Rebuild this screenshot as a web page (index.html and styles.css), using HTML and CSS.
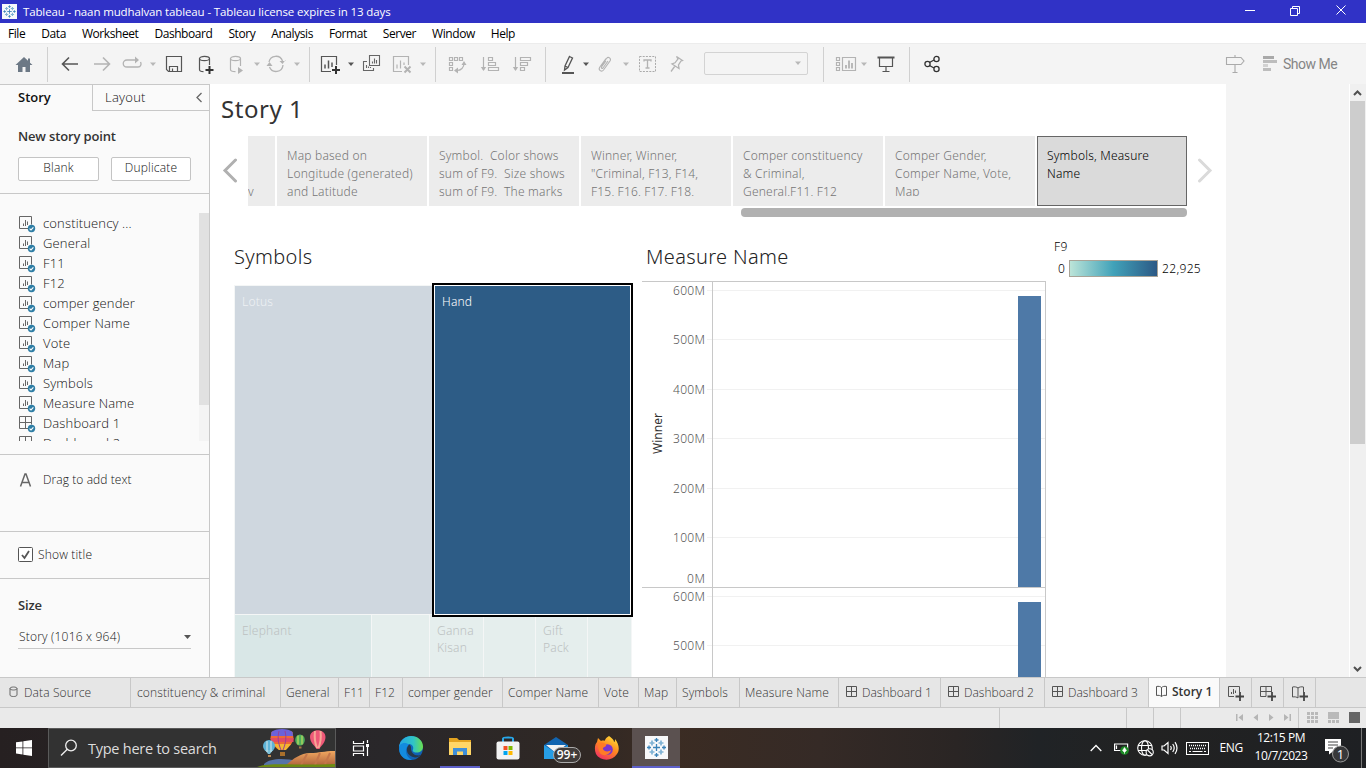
FILE: index.html
```html
<!DOCTYPE html>
<html lang="en">
<head>
<meta charset="utf-8">
<title>Tableau - naan mudhalvan tableau</title>
<link rel="stylesheet" href="styles.css">
</head>
<body>
<svg class="defs" width="0" height="0">
  <symbol id="caret" viewBox="0 0 10 20"><path d="M2 8.5h6L5 12z" fill="currentColor"/></symbol>
  <symbol id="sheet" viewBox="0 0 18 18"><g fill="none" stroke="#666"><path d="M9 12.5H.5v-12h12v8"/><path d="M4.500 10V7.500M6.500 10V4M8.500 9V5.500"/></g><circle cx="12.500" cy="12.500" r="3.700" fill="#2f7ea5"/><path d="M10.600 12.600l1.400 1.300 2.400-2.600" fill="none" stroke="#fff" stroke-width="1.100"/></symbol>
  <symbol id="dash" viewBox="0 0 18 18"><path d="M9 12.500H.5v-12h12v8M.5 6.500h12M6.500 .5v12" fill="none" stroke="#666"/><circle cx="12.500" cy="12.500" r="3.700" fill="#2f7ea5"/><path d="M10.600 12.600l1.400 1.300 2.400-2.600" fill="none" stroke="#fff" stroke-width="1.100"/></symbol>
  <symbol id="grid" viewBox="0 0 12 12"><path d="M.5 .5h10v10H.5zM.5 5.500h10M5.500 .5v10" fill="none" stroke="#555"/></symbol>
  <symbol id="logo" viewBox="0 0 23 23"><rect width="23" height="23" fill="#f7f8fa"/><g fill="none" stroke="#3b83b8" stroke-width="1.300"><path d="M11.500 8v7M8 11.500h7"/><path d="M11.500 2v4M9.500 4h4M11.500 17v4M9.500 19h4M2 11.500h4M4 9.500v4M17 11.500h4M19 9.500v4"/></g><g fill="none" stroke="#7fb2d4" stroke-width="1.700"><path d="M7 4.500v5M4.500 7h5M16 4.500v5M13.500 7h5M7 13.500v5M4.500 16h5M16 13.500v5M13.500 16h5"/></g></symbol>
</svg>

<header class="titlebar">
  <svg width="15" height="15"><use href="#logo"/></svg>
  <span class="win-title">Tableau - naan mudhalvan tableau - Tableau license expires in 13 days</span>
  <svg class="win-controls" width="102" height="14" viewBox="0 0 102 14" fill="none" stroke="#fff"><path d="M0 7.500h10M45.500 5.500h7v7h-7zM47.500 5V3.500h7v7H53M91.500 2.500l9 9M100.500 2.500l-9 9"/></svg>
</header>

<nav class="menubar"><span>File</span><span>Data</span><span>Worksheet</span><span>Dashboard</span><span>Story</span><span>Analysis</span><span>Format</span><span>Server</span><span>Window</span><span>Help</span></nav>

<div class="toolbar">
  <svg class="ic" viewBox="0 0 20 20"><path d="M10 3L1.500 11H4v7h4.500v-5h3v5H16v-7h2.500L16 8.700V4.500h-2v2.300z" fill="#6c7885"/></svg>
  <i class="sep"></i>
  <svg class="ic" viewBox="0 0 20 20"><path d="M18 10H3M9 3.500L2.500 10 9 16.500" fill="none" stroke="#555" stroke-width="1.600"/></svg>
  <svg class="ic" viewBox="0 0 20 20"><path d="M2 10h15M11 3.500l6.500 6.500-6.500 6.500" fill="none" stroke="#b3b3b3" stroke-width="1.600"/></svg>
  <svg class="ic" viewBox="0 0 20 20"><path d="M14 6H5C0 6 0 13 5 13h11c3 0 3.500-3 2.500-5" fill="none" stroke="#b3b3b3" stroke-width="1.300"/><path d="M13 2.500L17 6l-4 3.500z" fill="#b3b3b3"/></svg>
  <svg class="ca off"><use href="#caret"/></svg>
  <svg class="ic" viewBox="0 0 20 20"><path d="M2.500 2.500h15v15h-13l-2-2zM5.500 17v-4.500h8V17M8.500 17v-2.500" fill="none" stroke="#555" stroke-width="1.200"/></svg>
  <svg class="ic" viewBox="0 0 20 20"><g fill="none" stroke="#555" stroke-width="1.200"><ellipse cx="8.500" cy="4.500" rx="5" ry="2.200"/><path d="M3.500 4.500v11c0 1.500 2 2.200 4 2.200M13.500 4.500V11"/></g><path d="M13.500 12v8M9.500 16h8" stroke="#333" stroke-width="2"/></svg>
  <svg class="ic" viewBox="0 0 20 20"><g fill="none" stroke="#b3b3b3" stroke-width="1.200"><ellipse cx="7.500" cy="4.500" rx="5" ry="2.200"/><path d="M2.500 4.500v11c0 1.500 2 2.200 5 2.200M12.500 4.500V12"/></g><path d="M10 13l5 3.500-5 3.500z" fill="#b3b3b3"/></svg>
  <svg class="ca off"><use href="#caret"/></svg>
  <svg class="ic" viewBox="0 0 20 20"><g fill="none" stroke="#b3b3b3" stroke-width="1.300"><path d="M3 8a7 7 0 0 1 13.500-1M17 11a7 7 0 0 1-13.500 2"/></g><path d="M13.500 7h6v-1l-3 4zM.5 12h6l-3-4z" fill="#b3b3b3"/></svg>
  <svg class="ca off"><use href="#caret"/></svg>
  <i class="sep"></i>
  <svg class="ic" viewBox="0 0 20 20"><path d="M11 17.500H1.500v-15h15V11" fill="none" stroke="#555" stroke-width="1.200"/><path d="M5 14.500v-4M8.500 14.500v-8M12 13V8.500" stroke="#555" stroke-width="1.500"/><path d="M16 12v8M12 16h8" stroke="#333" stroke-width="2"/></svg>
  <svg class="ca"><use href="#caret"/></svg>
  <svg class="ic" viewBox="0 0 20 20"><path d="M8.500 1.500h10v10h-10zM6 7.500H2.500v9h10V14M11.500 9.500v-2M13.500 9.500v-5M15.500 9.500V6M5.500 14v-3M7.500 14v-1.500M9.500 14v-1" fill="none" stroke="#666" stroke-width="1.100"/></svg>
  <svg class="ic" viewBox="0 0 20 20"><g fill="none" stroke="#b3b3b3" stroke-width="1.200"><path d="M10 17.500H1.500v-15h15V11M5 14.500v-4M8.500 14.500v-8M12 11V8.500"/><path d="M12.500 12.500l6 6M18.500 12.500l-6 6" stroke-width="2"/></g></svg>
  <svg class="ca off"><use href="#caret"/></svg>
  <i class="sep"></i>
  <svg class="ic" viewBox="0 0 20 20"><g fill="none" stroke="#b3b3b3" stroke-width="1.200"><path d="M2.500 3.500h3v3h-3zM7.500 3.500h3v3h-3zM12.500 3.500h3v3h-3zM2.500 8.500h3v3h-3zM2.500 13.500h3v3h-3zM17 9.500c0 4-3 7-7 7"/></g><path d="M14.500 11l2.500-4 2.500 4zM11 13.500v6l-4-3z" fill="#b3b3b3"/></svg>
  <svg class="ic" viewBox="0 0 20 20"><path d="M3.500 3v13M8.500 3.500h4v3h-4zM8.500 8.500h7v3h-7zM8.500 13.500h10v3h-10z" fill="none" stroke="#b3b3b3" stroke-width="1.200"/><path d="M.8 13h5.400L3.500 17z" fill="#b3b3b3"/></svg>
  <svg class="ic" viewBox="0 0 20 20"><path d="M3.500 3v13M8.500 3.500h10v3h-10zM8.500 8.500h7v3h-7zM8.500 13.500h4v3h-4z" fill="none" stroke="#b3b3b3" stroke-width="1.200"/><path d="M.8 13h5.400L3.500 17z" fill="#b3b3b3"/></svg>
  <i class="sep"></i>
  <svg class="ic" viewBox="0 0 20 20"><path d="M11.500 2.500l3 1.500-4.500 9.500-3.500 2.500.500-4zM7 12l3 1.500" fill="none" stroke="#555" stroke-width="1.300"/><path d="M4 19h12" stroke="#555" stroke-width="2"/></svg>
  <svg class="ca"><use href="#caret"/></svg>
  <svg class="ic" viewBox="0 0 20 20"><path d="M6 12l5.500-7.500c2-2.500 5 0 3.500 2.500l-6.500 9c-2 2.500-5.500 0-3.800-2.700L11 4.500M13 7l-5 7c-1 1-2 0-1.500-1L11 7" fill="none" stroke="#b3b3b3" stroke-width="1.100"/></svg>
  <svg class="ca off"><use href="#caret"/></svg>
  <svg class="ic" viewBox="0 0 20 20"><path d="M2.500 2.500h16v15h-16z" fill="none" stroke="#aaa" stroke-dasharray="2 1.200"/><path d="M7 7.500V6h7v1.500M10.500 6v8M8.500 14h4" fill="none" stroke="#b3b3b3" stroke-width="1.300"/></svg>
  <svg class="ic" viewBox="0 0 20 20"><path d="M9.500 2.500l6 4-1.500.5-2.500 4 .5 3.500-7-4.500 3-1.200L11 5zM8 12l-4 5.500" fill="none" stroke="#b3b3b3" stroke-width="1.300"/></svg>
  <span class="combo"><svg class="ca off"><use href="#caret"/></svg></span>
  <i class="sep"></i>
  <svg class="ic wide" viewBox="0 0 22 20"><path d="M1.500 3.500h3v3h-3zM1.500 8.500h3v3h-3zM1.500 13.500h3v3h-3zM7.500 3.500h13v13h-13z" fill="none" stroke="#b3b3b3" stroke-width="1.200"/><path d="M11 14.500V11M14 14.500v-8M17 14.500V9" stroke="#b3b3b3" stroke-width="1.800"/></svg>
  <svg class="ca off"><use href="#caret"/></svg>
  <svg class="ic" viewBox="0 0 20 20"><path d="M4.500 4v8.500h13V4M11 12.500V17M7.500 17.500h7" fill="none" stroke="#555" stroke-width="1.200"/><path d="M2.500 3.500h17" stroke="#555" stroke-width="2"/></svg>
  <i class="sep"></i>
  <svg class="ic" viewBox="0 0 20 20" fill="none" stroke="#333" stroke-width="1.300"><circle cx="5.500" cy="10" r="2.600"/><circle cx="14.500" cy="5" r="2.600"/><circle cx="14.500" cy="15" r="2.600"/><path d="M7.500 8.500L12 6M7.500 11.500L12 14"/></svg>
  <svg class="ic" viewBox="0 0 20 20"><path d="M1.500 3.500H16l3 3.500-3 3.500H1.500zM10 1v2.500M10 10.500V18M7.500 18.500h5" fill="none" stroke="#aaa" stroke-width="1.100"/></svg>
  <span class="showme"><svg width="14" height="20" viewBox="0 0 14 20"><path d="M0 2h11v3H0z" fill="#a9a9a9"/><path d="M0 6h14v3H0zM0 14h8v3H0z" fill="#bdbdbd"/><path d="M0 10h5v3H0z" fill="#d2d2d2"/></svg>Show Me</span>
</div>

<div class="workspace">
  <aside class="panel">
    <div class="panel-tabs"><b>Story</b><span>Layout<svg width="8" height="12" viewBox="0 0 8 12"><path d="M6.500 1L2 5.500 6.500 10" fill="none" stroke="#666" stroke-width="1.300"/></svg></span></div>
    <section class="newpoint"><h3>New story point</h3><div class="btns"><button>Blank</button><button>Duplicate</button></div></section>
    <section class="sheets">
      <ul>
        <li><svg><use href="#sheet"/></svg>constituency ...</li><li><svg><use href="#sheet"/></svg>General</li><li><svg><use href="#sheet"/></svg>F11</li><li><svg><use href="#sheet"/></svg>F12</li><li><svg><use href="#sheet"/></svg>comper gender</li><li><svg><use href="#sheet"/></svg>Comper Name</li><li><svg><use href="#sheet"/></svg>Vote</li><li><svg><use href="#sheet"/></svg>Map</li><li><svg><use href="#sheet"/></svg>Symbols</li><li><svg><use href="#sheet"/></svg>Measure Name</li><li><svg><use href="#dash"/></svg>Dashboard 1</li><li><svg><use href="#dash"/></svg>Dashboard 2</li>
      </ul>
      <div class="list-scroll"><i></i></div>
    </section>
    <section class="drag"><svg width="13" height="14" viewBox="0 0 13 14"><path d="M1.500 13.500L6 1h1l4.500 12.500M3 9.500h7" fill="none" stroke="#666" stroke-width="1.500"/></svg>Drag to add text</section>
    <section class="showtitle"><svg width="15" height="15" viewBox="0 0 15 15"><rect x=".5" y=".5" width="14" height="14" rx="1" fill="#fff" stroke="#555"/><path d="M4 8l2.500 3L11 4" fill="none" stroke="#555" stroke-width="1.800"/></svg>Show title</section>
    <section class="size"><h3>Size</h3><div class="select">Story (1016 x 964)<svg width="7" height="4" viewBox="0 0 7 4"><path d="M0 0h7L3.500 4z" fill="#555"/></svg></div></section>
  </aside>

  <main class="story">
    <h1>Story 1</h1>
    <div class="navigator">
      <svg class="prev" width="18" height="26" viewBox="0 0 18 26"><path d="M15.500 2L5 12.500 15.500 23" fill="none" stroke="#b0b0b0" stroke-width="3" stroke-linecap="round"/></svg>
      <div class="points">
        <div class="pt cut"><p><br><br>v</p></div>
        <div class="pt"><p>Map based on<br>Longitude (generated)<br>and Latitude</p></div>
        <div class="pt"><p>Symbol.&nbsp; Color shows<br>sum of F9.&nbsp; Size shows<br>sum of F9.&nbsp; The marks</p></div>
        <div class="pt"><p>Winner, Winner,<br>"Criminal, F13, F14,<br>F15, F16, F17, F18,</p></div>
        <div class="pt"><p>Comper constituency<br>&amp; Criminal,<br>General,F11, F12</p></div>
        <div class="pt"><p>Comper Gender,<br>Comper Name, Vote,<br>Map</p></div>
        <div class="pt on"><p>Symbols, Measure<br>Name</p></div>
      </div>
      <svg class="next" width="18" height="26" viewBox="0 0 18 26"><path d="M3.500 2L14 12.500 3.500 23" fill="none" stroke="#dadada" stroke-width="3" stroke-linecap="round"/></svg>
    </div>
    <div class="nav-thumb"></div>
    <div class="views">
      <section class="treeview">
        <h2>Symbols</h2>
        <div class="treemap">
          <div class="row big"><div class="cell lotus">Lotus</div><div class="cell hand">Hand</div></div>
          <div class="row small"><div class="cell elephant">Elephant</div><div class="cell w57"></div><div class="cell w53">Ganna<br>Kisan</div><div class="cell w51"></div><div class="cell w51">Gift<br>Pack</div><div class="cell w42"></div></div>
        </div>
      </section>
      <section class="measure">
        <h2>Measure Name</h2>
        <svg class="chart" width="404" height="396" viewBox="0 0 404 396">
          <path d="M65 9.500h338M65 58.500h338M65 108.500h338M65 157.500h338M65 207.500h338M65 256.500h338M65 315.500h338M65 364.500h338" stroke="#f1f1f1"/>
          <path d="M376 15h23v291h-23zM376 321h23v75h-23z" fill="#4e79a7"/>
          <path d="M0 .5h404M70.500 0v396M403.500 0v396M0 306.500h404" fill="none" stroke="#c8c8c8"/>
          <g class="axis"><text x="31" y="14" textLength="32">600M</text><text x="31" y="63" textLength="32">500M</text><text x="31" y="113" textLength="32">400M</text><text x="31" y="162" textLength="32">300M</text><text x="31" y="212" textLength="32">200M</text><text x="31" y="261" textLength="32">100M</text><text x="45" y="302" textLength="18">0M</text><text x="31" y="320" textLength="32">600M</text><text x="31" y="369" textLength="32">500M</text></g>
          <text class="axis-title" transform="translate(20 173) rotate(-90)" textLength="41">Winner</text>
        </svg>
      </section>
      <section class="legend"><div>F9</div><div class="scale"><span>0</span><i></i><span>22,925</span></div></section>
    </div>
  </main>
  <div class="gutter"></div>
  <div class="vscroll"><svg width="16" height="17" viewBox="0 0 16 17"><path d="M4 11l3.500-3.500L11 11" fill="none" stroke="#505050" stroke-width="2"/></svg><i></i><svg width="16" height="17" viewBox="0 0 16 17"><path d="M4 7l3.500 3.500L11 7" fill="none" stroke="#505050" stroke-width="2"/></svg></div>
</div>

<div class="tabs">
  <span class="t0"><svg width="10" height="12" viewBox="0 0 10 12"><path d="M1 2.500v6.500c0 2 7 2 7 0V2.500c0-2-7-2-7 0 0 2 7 2 7 0" fill="none" stroke="#666"/></svg>Data Source</span><span class="t1">constituency &amp; criminal</span><span class="t2">General</span><span class="t3">F11</span><span class="t4">F12</span><span class="t5">comper gender</span><span class="t6">Comper Name</span><span class="t7">Vote</span><span class="t8">Map</span><span class="t9">Symbols</span><span class="t10">Measure Name</span><span class="t11 d"><svg><use href="#grid"/></svg>Dashboard 1</span><span class="t12 d"><svg><use href="#grid"/></svg>Dashboard 2</span><span class="t12 d"><svg><use href="#grid"/></svg>Dashboard 3</span><span class="active"><svg width="12" height="13" viewBox="0 0 12 13"><path d="M.5 1.500c2-.5 4 0 5 1 1-1 3-1.500 5-1v9c-2-.5-4 0-5 1-1-1-3-1.500-5-1zM5.500 2.500v9" fill="none" stroke="#555"/></svg>Story 1</span>
  <span class="add"><svg width="18" height="16" viewBox="0 0 18 16"><path d="M8 11.500H2.500v-10h11V7M5.500 9V7M7.500 9V4M9.500 8V5.500" fill="none" stroke="#555"/><path d="M14 7v9M9.500 11.500h9" stroke="#444" stroke-width="1.800"/></svg></span>
  <span class="add"><svg width="18" height="16" viewBox="0 0 18 16"><path d="M8 11.500H2.500v-10h11V7M2.500 6.500h11M8 1.500v10" fill="none" stroke="#555"/><path d="M14 7v9M9.500 11.500h9" stroke="#444" stroke-width="1.800"/></svg></span>
  <span class="add"><svg width="18" height="16" viewBox="0 0 18 16"><path d="M8 3v10c-1-1-3.500-1.500-5.500-1V2c2-.5 4.500 0 5.500 1 1-1 3.500-1.500 5.500-1v5" fill="none" stroke="#555"/><path d="M14 7v9M9.500 11.500h9" stroke="#444" stroke-width="1.800"/></svg></span>
</div>

<div class="status">
  <i class="s0"></i><i class="s1"></i><i class="s2"></i><i class="s2"></i><i class="s3"><svg width="56" height="10" viewBox="0 0 56 10" fill="#b5b5b5"><path d="M0 1h1.500v7H0zM7 1v7L2.500 4.500zM22 1v7l-4.500-3.500zM33 1v7l4.500-3.500zM48 1v7l4.500-3.500zM53.500 1H55v7h-1.500z"/></svg></i>
  <svg class="viewmodes" width="54" height="12" viewBox="0 0 54 12"><path d="M0 0h3v3H0zM4 0h3v3H4zM8 0h3v3H8zM0 4h3v3H0zM4 4h3v3H4zM8 4h3v3H8zM0 8h3v3H0zM4 8h3v3H4zM8 8h3v3H8zM21 0h11v7H21zM21 8h3v3h-3zM25 8h3v3h-3zM29 8h3v3h-3z" fill="#b9b9b9"/><path d="M42 0h11v11H42z" fill="#666"/></svg>
</div>

<footer class="taskbar">
  <div class="start"><svg width="16" height="16" viewBox="0 0 16 16" fill="#fff"><path d="M0 2.300l6.500-.9v6.100H0zM7.300 1.300L16 0v7.500H7.300zM0 8.300h6.500v6.200L0 13.600zM7.300 8.300H16V16l-8.700-1.300z"/></svg></div>
  <div class="search">
    <svg width="18" height="18" viewBox="0 0 18 18"><circle cx="11" cy="6.500" r="5.300" fill="none" stroke="#eee" stroke-width="1.300"/><path d="M7.300 10.300L1 16.500" stroke="#eee" stroke-width="1.400"/></svg>
    <span>Type here to search</span>
    <svg class="art" width="80" height="38" viewBox="0 0 80 38">
      <defs><linearGradient id="hill" x2="0" y2="1"><stop stop-color="#f0a860"/><stop offset="1" stop-color="#a85c38"/></linearGradient></defs>
      <path d="M9 35c6-6 20-6 34-3v6H9z" fill="#5573a8"/><path d="M31 36c6-5 14-12 24-12s13-2 25-2v16H31z" fill="url(#hill)"/><path d="M46 36l6-11M60 36l5-12M70 35l5-11" stroke="#c4764a" stroke-width="2"/><path d="M2 38c14-5 38-1 78-3v3z" fill="#6c8c12"/>
      <g transform="translate(2 0)"><path d="M14.500 3c2-2.500 19-2.500 21 0l1 6c0 5-6 11-9 12h-5c-3-1-9-7-9-12z" fill="#ee6b35"/><path d="M14.500 3c4-4 17-4 21 0l.5 4h-22z" fill="#6b62da"/><path d="M13.500 9h23v4h-22z" fill="#e34c62"/><path d="M16 15h18l-5 6h-7z" fill="#f4b531"/><path d="M22 2c-2 8 0 14 2 19M28 2c2 8 0 14-2 19" fill="none" stroke="#9b3f95"/><path d="M23 23h5v4h-5z" fill="#a9702c"/>
      <circle cx="12" cy="17" r="6" fill="#5eb4d8"/><path d="M8 21h8l-3 4h-2z" fill="#7bc0d8"/><path d="M10 12v11M14 12v11" stroke="#d8e8ea"/><path d="M11 26h3v2h-3z" fill="#bb8a55"/>
      <ellipse cx="43" cy="11" rx="4.800" ry="5.500" fill="#4fae5c"/><path d="M41 6.500v9M45 6.500v9" stroke="#d9e261"/><path d="M42 17.500h2.500v2H42z" fill="#a87844"/>
      <path d="M53 8c0-9 15.500-9 15.500 0 0 6-5 9-6 12h-3c-1-3-6.500-6-6.500-12z" fill="#ee5878"/><path d="M58 2c-1 8 0 12 2 17M63.500 2c1 8 0 12-2 17" fill="none" stroke="#f6a695" stroke-width="2"/></g>
    </svg>
  </div>
  <div class="app view"><svg width="18" height="18" viewBox="0 0 18 18" fill="none" stroke="#fff" stroke-width="1.200"><path d="M1.500 2v2.500h10V2M1.500 7h10v5h-10zM1.500 17v-2.500h10V17M15.500 1v3M15.500 8v9"/><path d="M14 5h3v3h-3z" fill="#fff" stroke="none"/></svg></div>
  <div class="app edge"><svg width="26" height="26" viewBox="0 0 26 26"><defs><linearGradient id="e1"><stop stop-color="#24a5e6"/><stop offset=".6" stop-color="#30c4c6"/><stop offset="1" stop-color="#6be04d"/></linearGradient><linearGradient id="e2" x2="1" y2="1"><stop stop-color="#0f7cd8"/><stop offset="1" stop-color="#1158a8"/></linearGradient></defs><circle cx="13" cy="13" r="12" fill="url(#e2)"/><path d="M1 12C2 4.500 8 1 13 1c7 0 12 5 12 10.500 0 4-3 6-6.500 6-3 0-4.500-1.500-3.500-3 1-3-1-5.500-4-5.500-4 0-8.500 1-10 3z" fill="url(#e1)"/><path d="M11 9.500c-4 4-2.500 12 6 13 2 .2 4.500-.8 6-2.500-3 1-8 .5-9.500-4-1-3 .5-5-2.500-6.500z" fill="#27384a"/><path d="M2 10c3-3 7-2 9-.5-5 4-4 12 3 15.400C5 26-1 18 2 10z" fill="#138bdf"/></svg></div>
  <div class="app run"><svg width="22" height="20" viewBox="0 0 22 20"><path d="M0 1h8l2 2h12v15H0z" fill="#e3a320"/><path d="M0 5h22v13H0z" fill="#ffd667"/><path d="M4 18v-7h14v7h-4v-3.500H8V18z" fill="#3f8fd8"/></svg></div>
  <div class="app store"><svg width="24" height="24" viewBox="0 0 24 24"><path d="M7 7V2.500C7 1 17 1 17 2.500V7" fill="none" stroke="#28a8ea" stroke-width="2"/><rect x=".5" y="5.500" width="23" height="18" rx="2" fill="#f2f2f2"/><path d="M7.500 10h4v4h-4z" fill="#f25022"/><path d="M12.500 10h4v4h-4z" fill="#7fba00"/><path d="M7.500 15h4v4h-4z" fill="#00a4ef"/><path d="M12.500 15h4v4h-4z" fill="#ffb900"/></svg></div>
  <div class="app mail"><svg width="26" height="24" viewBox="0 0 26 24"><path d="M1 9L13 1l12 8v14H1z" fill="#1265b0"/><path d="M1 9l12 8 12-8v14H1z" fill="#279ee5"/><path d="M3 9h20l-10 8z" fill="#f3f3f3"/></svg><span class="badge">99+</span></div>
  <div class="app fox"><svg width="26" height="26" viewBox="0 0 26 26"><defs><linearGradient id="f1" x1=".8" x2=".2" y2="1"><stop stop-color="#ffe23a"/><stop offset=".45" stop-color="#ff8a1f"/><stop offset="1" stop-color="#f02b66"/></linearGradient></defs><path d="M15 1c4 3 5 4 5 6 1 0 1-2 1-3 4 5 5 11 2 15-5 8-17 7-21 0C0 14 1 9 3 7l1-4 3 3c2-1 3 0 4-.5C11 4 13 2 15 1z" fill="url(#f1)"/><circle cx="13.500" cy="14.500" r="5.300" fill="#7a35cf"/><path d="M4 8c2-1 7-1 8 2 1 2-4 2-3 4 1 3 6 3 8 1-1 5-8 7-11 3-2-3-2-7-2-10z" fill="#ff7b26"/></svg></div>
  <div class="app current"><svg width="23" height="23"><use href="#logo"/></svg></div>
  <div class="tray">
    <svg width="12" height="8" viewBox="0 0 12 8"><path d="M.7 7L6 1.500 11.300 7" fill="none" stroke="#fff" stroke-width="1.300"/></svg>
    <svg class="bat" width="15" height="14" viewBox="0 0 15 14"><path d="M.6 3v6.500h13V3zM2.500 4.500v3.500" fill="none" stroke="#fff" stroke-width="1.200"/><circle cx="10.500" cy="9.500" r="4.300" fill="#1c8a25"/><path d="M10.500 6.500l2 3-2 2-2-2zM10.500 10v3" fill="#fff" stroke="#fff" stroke-width=".5"/></svg>
    <svg class="globe" width="17" height="17" viewBox="0 0 17 17" fill="none" stroke="#fff" stroke-width="1.100"><circle cx="8" cy="8" r="7.300"/><ellipse cx="8" cy="8" rx="3.500" ry="7.300"/><path d="M1 5.500h14M1 10.500h9"/><circle cx="12.700" cy="12.300" r="3.600" fill="#202123"/><path d="M10.500 10l4.500 4.500"/></svg>
    <svg class="vol" width="17" height="14" viewBox="0 0 17 14" fill="none" stroke="#fff" stroke-width="1.200"><path d="M1 5h2l4-3.500v11L3 9H1zM9.500 5q1.500 2 0 4M11.700 3q3 4 0 8M14 1.200q4 6 0 11.600"/></svg>
    <svg class="kbd" width="23" height="13" viewBox="0 0 23 13"><rect x=".5" y=".5" width="22" height="12" fill="none" stroke="#fff"/><path d="M3 3.500h18M4 6.500h16" stroke="#fff" stroke-dasharray="1 1" stroke-width="1.300"/><path d="M3 9.500h2M6.500 9.500h10M18 9.500h2" stroke="#fff"/></svg>
    <span class="lang">ENG</span>
    <div class="clock"><span>12:15 PM</span><span>10/7/2023</span></div>
    <div class="note"><svg width="26" height="26" viewBox="0 0 26 26"><path d="M0 1h16v12H8.500L4 16.500V13H0z" fill="#fff"/><path d="M3 4h10M3 7h10M3 10h5" stroke="#444" stroke-width="1.200"/><circle cx="15.500" cy="16" r="8" fill="#37383a" stroke="#999"/></svg><b>1</b></div>
    <i class="peek"></i>
  </div>
</footer>
</body>
</html>
```
FILE: styles.css
```css
* { box-sizing: border-box; }
body { margin: 0; width: 1366px; height: 768px; overflow: hidden; display: flex; flex-direction: column; background: #f4f4f4; font: 12px/16px "Open Sans", "Noto Sans", sans-serif; color: #333; }
.defs { position: absolute; }
svg { display: block; flex: none; }
h1, h2, h3, p, ul { margin: 0; padding: 0; font-weight: 400; }

.titlebar { height: 23px; flex: none; display: flex; align-items: center; background: #3032c6; color: #fff; padding-left: 2px; }
.win-title { margin-left: 6px; font-size: 11.5px; letter-spacing: -.13px; white-space: nowrap; }
.win-controls { margin-left: auto; margin-right: 19px; margin-bottom: 3px; }

.menubar { height: 20px; flex: none; display: flex; align-items: center; gap: 16px; padding: 2px 0 0 8px; background: #fff; color: #000; font-size: 12px; letter-spacing: -.43px; }

.toolbar { height: 41px; flex: none; border-top: 1px solid #ececec; background: #f4f4f4; display: grid; align-items: start; padding: 10px 0 0 14px;
  grid-template-columns: 33px 13px 32px 30px 26px 16px 32px 32px 24px 14px 26px 17px 11px 26px 15px 31px 26px 17px 12px 33px 32px 33px 13px 23px 14px 26px 16px 30px 37px 119px 12px 24px 16px 34px 13px 303px 38px 1fr; }
.ic { width: 20px; height: 20px; }
.ic.wide { width: 22px; }
.ca { width: 10px; height: 20px; color: #555; }
.ca.off { color: #b8b8b8; }
.sep { width: 1px; height: 35px; margin-top: -7px; background: #d0d0d0; }
.combo { width: 104px; height: 23px; margin-top: -2px; border: 1px solid #d3d3d3; border-radius: 2px; display: flex; justify-content: flex-end; padding-right: 4px; }
.showme { display: flex; align-items: center; gap: 6px; color: #858585; font: 14px/20px Roboto, sans-serif; letter-spacing: -.5px; white-space: nowrap; }

.workspace { height: 593px; flex: none; display: flex; }
.panel { width: 210px; flex: none; background: #fafafa; border-right: 1px solid #c8c8c8; border-top: 1px solid #c8c8c8; font-size: 12px; font-weight: 300; display: flex; flex-direction: column; color: #111; }
.panel-tabs { height: 26px; flex: none; display: flex; line-height: 25px; font-size: 13px; }
.panel-tabs b { width: 92px; padding-left: 18px; color: #111; font-weight: 600; }
.panel-tabs span { flex: 1; display: flex; align-items: center; justify-content: space-between; padding: 0 6px 0 12px; border-left: 1px solid #c8c8c8; border-bottom: 1px solid #c8c8c8; letter-spacing: .25px; }
.panel section { border-bottom: 1px solid #c8c8c8; flex: none; }
.panel h3 { font-size: 13px; font-weight: 600; line-height: 18px; letter-spacing: -.15px; color: #333; }
.newpoint { height: 83px; padding: 16px 0 0 18px; }
.btns { display: flex; gap: 12px; margin-top: 12px; }
.btns button { width: 81px; height: 24px; padding: 0 0 3px; border: 1px solid #c4c4c4; border-radius: 2px; background: #fff; color: #111; font: 300 12px "Open Sans", sans-serif; letter-spacing: .2px; }
.btns button + button { width: 80px; }
.sheets { height: 261px; display: flex; justify-content: space-between; padding: 19px 0 13px; }
.sheets ul { list-style: none; height: 228px; overflow: hidden; padding-left: 19px; font-size: 13px; font-weight: 300; letter-spacing: .15px; }
.sheets li { height: 20px; display: flex; align-items: center; gap: 6px; white-space: nowrap; }
.sheets li svg { width: 18px; height: 18px; margin-top: 4px; }
.list-scroll { width: 10px; height: 228px; background: #f4f4f4; }
.list-scroll i { display: block; height: 192px; background: #e1e1e1; }
.drag { height: 77px; display: flex; align-items: flex-start; gap: 11px; padding: 17px 0 0 19px; letter-spacing: .08px; }
.drag svg { margin-top: 1px; }
.showtitle { height: 47px; display: flex; align-items: center; gap: 5px; padding: 0 0 1px 18px; letter-spacing: .17px; }
.panel .size { padding: 17px 18px 0; border: 0; }
.select { height: 23px; margin-top: 12px; border-bottom: 1px solid #c8c8c8; padding-left: 1px; display: flex; align-items: center; justify-content: space-between; letter-spacing: .2px; }

.story { width: 1016px; flex: none; background: #fff; overflow: hidden; font-family: "Noto Sans", "Open Sans", sans-serif; }
.story h1 { font-size: 24px; line-height: 34px; height: 52px; padding: 8px 0 0 11px; color: #333; letter-spacing: .55px; }
.navigator { display: flex; height: 70px; align-items: center; }
.prev { margin-left: 10px; width: 18px; }
.points { margin-left: 10px; width: 939px; height: 70px; display: flex; gap: 2px; overflow: hidden; }
.pt { width: 150px; flex: none; background: #ececec; color: #757575; padding: 11px 0 0 10px; font-size: 12px; line-height: 18px; font-weight: 300; letter-spacing: .07px; white-space: nowrap; }
.pt p { height: 49px; overflow: hidden; font-weight: 300; letter-spacing: .2px; }
.pt.cut { width: 27px; padding-left: 0; }
.pt.on { background: #dadada; border: 1px solid #666; color: #000; padding: 10px 0 0 9px; }
.next { margin-left: 9px; }
.nav-thumb { margin: 2px 0 0 531px; width: 446px; height: 9px; border-radius: 4px; background: #b1b1b1; }
.views { display: flex; padding-left: 24px; margin-top: 22px; }
.views h2 { font-size: 20px; line-height: 28px; height: 44px; padding-top: 4px; font-weight: 300; color: #222; letter-spacing: .35px; }
.treeview { width: 408px; }
.treeview h2 { height: 46px; }
.treemap { width: 398px; background: #f4f6f6; font-weight: 300; font-size: 12px; line-height: 17px; letter-spacing: .2px; }
.row { display: flex; gap: 1px; }
.big { padding: 1px 0 0 1px; gap: 0; height: 330px; }
.cell { padding: 7px 0 0 7px; color: #bcc1c1; background: #e5eeed; height: 63px; }
.lotus { width: 197px; flex: none; height: 328px; background: #cfd7df; color: #eef1f4; }
.hand { position: relative; flex: none; width: 201px; height: 334px; margin-top: -3px; padding: 8px 0 0 8px; background: #2d5c86; color: #fff; border: 2px solid #000; box-shadow: inset 0 0 0 1px #fff; }
.small { padding-left: 1px; }
.elephant { width: 136px; background: #d9e7e7; }
.w57 { width: 57px; } .w53 { width: 53px; } .w51 { width: 51px; } .w42 { width: 43px; }
.measure { width: 412px; }
.measure h2 { padding-left: 4px; height: 42px; }
.axis text { font-size: 12px; font-weight: 300; fill: #555; }
.axis-title { font-size: 12px; fill: #333; }
.legend { font-size: 12px; line-height: 16px; font-weight: 300; color: #000; letter-spacing: .35px; }
.scale { display: flex; align-items: center; gap: 4px; padding-left: 4px; margin-top: 5px; }
.scale span:first-child { width: 7px; }
.scale i { width: 89px; height: 17px; border: 1px solid #a8a397; background: linear-gradient(90deg, #bce4d8, #41a2b9 50%, #2c5985); }
.gutter { width: 123px; background: #f4f4f4; }
.vscroll { width: 17px; background: #f0f0f0; border-left: 1px solid #fff; display: flex; flex-direction: column; }
.vscroll i { width: 15px; height: 343px; margin-bottom: auto; background: #cdcdcd; }

.tabs { height: 31px; flex: none; display: flex; background: #e6e6e6; border-top: 1px solid #c8c8c8; border-bottom: 1px solid #c8c8c8; color: #333; font-size: 12px; font-weight: 300; letter-spacing: .12px; }
.tabs span { flex: none; border-right: 1px solid #c8c8c8; padding-left: 5px; line-height: 29px; white-space: nowrap; }
.tabs .t0 { width: 131px; padding-left: 9px; display: flex; align-items: center; gap: 5px; }
.t0 svg { margin-bottom: 2px; }
.tabs .t1 { width: 150px; padding-left: 6px; } .t2 { width: 58px; } .t3 { width: 31px; } .t4 { width: 33px; } .t5 { width: 100px; } .t6 { width: 96px; } .t7 { width: 40px; } .t8 { width: 38px; } .t9 { width: 63px; } .t10 { width: 99px; }
.tabs .d { display: flex; align-items: center; gap: 4px; padding-left: 7px; letter-spacing: 0; }
.t11 { width: 102px; } .t12 { width: 104px; }
.d svg { width: 12px; height: 12px; margin-bottom: 2px; }
.tabs .active { width: 71px; display: flex; align-items: center; gap: 4px; padding: 0 0 2px 7px; background: #fafafa; color: #333; font-weight: 600; letter-spacing: 0; }
.tabs .add { width: 32px; padding: 7px 0 0 6px; }

.status { height: 20px; flex: none; background: #eaeaea; display: flex; align-items: center; }
.status > i { height: 20px; border-right: 1px solid #c8c8c8; }
.s0 { width: 1000px; } .s1 { width: 127px; } .s2 { width: 27px; } .s3 { width: 118px; padding: 5px 0 0 55px; }
.viewmodes { margin-left: 8px; }

.taskbar { height: 40px; flex: none; display: flex; color: #fff; background: linear-gradient(90deg, #262021, #29272a 28%, #302824 43%, #3b2c23 49%, #352a26 60%, #2a2524 70%, #202326 76%, #222 84%, #1e2023); }
.start { width: 48px; display: grid; place-items: center; }
.search { width: 288px; background: #323232; border: 1px solid #5a5a5a; display: flex; align-items: center; padding-left: 11px; }
.search span { margin-left: 10px; padding-top: 2px; font-size: 14.500px; letter-spacing: -.25px; color: #ddd; white-space: nowrap; }
.art { margin-left: auto; }
.app { width: 49px; display: grid; place-items: center; position: relative; }
.app.edge { width: 52px; }
.app.run { border-bottom: 2px solid #5d60c9; width: 40px; margin: 0 4px 0 3px; padding-right: 1px; }
.app.store { width: 48px; }
.app.mail { padding-right: 2px; }
.app.fox { width: 51px; }
.badge { position: absolute; left: 21px; top: 19px; width: 28px; height: 16px; border: 1px solid #aaa; border-radius: 8px; background: #403c3a; font: 600 12px/14px "Open Sans", sans-serif; text-align: center; }
.app.current { width: 48px; background: #5b5150; border-bottom: 2px solid #5d60c9; }
.tray { margin-left: auto; display: flex; align-items: center; font-size: 12px; }
.bat { margin-left: 12px; }
.globe { margin-left: 8px; }
.vol { margin-left: 7px; }
.kbd { margin-left: 8px; }
.lang { margin-left: 10px; letter-spacing: -.3px; }
.clock { width: 62px; margin-left: 7px; display: flex; flex-direction: column; align-items: center; line-height: 18px; font-size: 12px; letter-spacing: -.45px; margin-top: -2px; }
.note { position: relative; margin-left: 13px; width: 26px; margin-top: 5px; }
.note b { position: absolute; left: 0; top: 8px; width: 31px; text-align: center; font-weight: 400; font-size: 13px; }
.peek { width: 1px; height: 40px; background: #777; margin: 0 4px 0 10px; }
```
